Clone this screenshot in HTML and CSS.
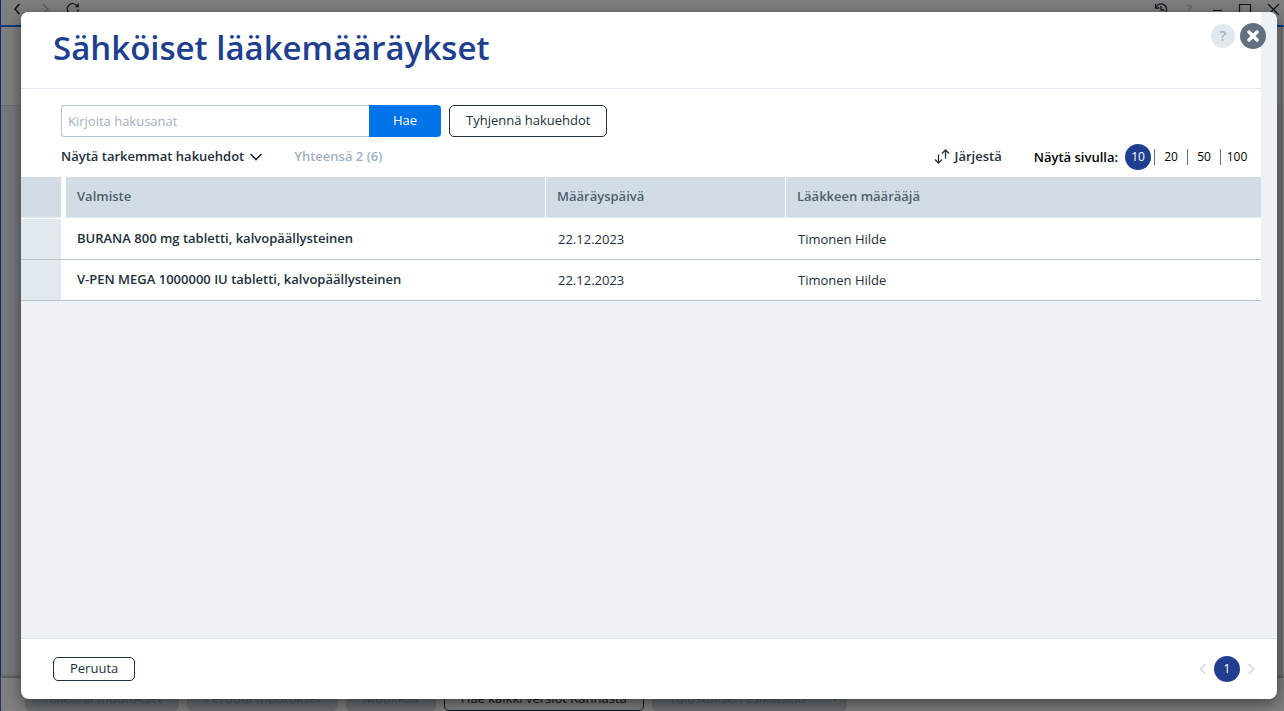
FILE: index.html
```html
<!DOCTYPE html>
<html lang="fi">
<head>
<meta charset="utf-8">
<title>Sähköiset lääkemääräykset</title>
<link rel="stylesheet" href="styles.css">
</head>
<body>
<div class="app" inert>
  <header class="titlebar">
    <button class="tool" aria-label="Takaisin"><svg width="14" height="14" viewBox="0 0 14 14"><path d="M9.500 2 5 7l4.500 5" stroke-width="1.700"/></svg></button>
    <button class="tool faint" aria-label="Eteenpäin"><svg width="14" height="14" viewBox="0 0 14 14"><path d="m5 2 5 5-5 5"/></svg></button>
    <button class="tool" aria-label="Päivitä"><svg width="14" height="14" viewBox="0 0 14 14"><path d="M3.300 11.500A5.500 5.500 0 1 1 11.500 4.500M9.500 11.500A5.500 5.500 0 0 0 12.500 7.500" stroke-width="1.200"/><path d="M12.800 1v4.200H8.600z" fill="currentColor" stroke="none"/></svg></button>
    <span class="grow"></span>
    <button class="tool" aria-label="Historia"><svg width="14" height="14" viewBox="0 0 14 14"><path d="M2 5.500A5.500 5.500 0 1 1 3 11M1.500 2v4h4M7 4v4h3.500" stroke-width="1.300"/></svg></button>
    <button class="tool faint" aria-label="Ohje">?</button>
    <button class="tool" aria-label="Pienennä"><svg width="14" height="14" viewBox="0 0 14 14"><path d="M3 8.500h9" stroke-width="1"/></svg></button>
    <button class="tool" aria-label="Suurenna"><svg width="14" height="14" viewBox="0 0 14 14"><path d="M1.500 2.500h11v11h-11z" stroke-width="1.200"/></svg></button>
    <button class="tool" aria-label="Sulje"><svg width="14" height="14" viewBox="0 0 14 14"><path d="m2 2 11 11M13 2 2 13" stroke-width="1.300"/></svg></button>
  </header>
  <div class="app-head"></div>
  <div class="app-body"></div>
  <footer class="app-foot">
    <button class="btn off">Tallenna muutokset</button>
    <button class="btn off">Peruuta muutokset</button>
    <button class="btn off">Muokkaa</button>
    <button class="btn">Hae kaikki versiot Kannasta</button>
    <button class="btn off split">Tulostuksen esikatselu <svg width="12" height="12" viewBox="0 0 12 12"><path d="m2 4 4 4 4-4"/></svg></button>
  </footer>
</div>

<div class="overlay">
  <section class="dialog" role="dialog" aria-modal="true" aria-labelledby="title">
    <div class="corner">
      <button class="round help" aria-label="Ohje">?</button>
      <button class="round close" aria-label="Sulje"><svg width="12" height="12" viewBox="0 0 12 12"><path d="m2 2 8 8M10 2 2 10" stroke-width="3.500" stroke-linecap="round"/></svg></button>
    </div>
    <div class="scroll">
      <header class="head"><h1 id="title">Sähköiset lääkemääräykset</h1></header>
      <form class="search">
        <input class="field" type="text" aria-label="Hakusanat" placeholder="Kirjoita hakusanat">
        <button class="go" type="button">Hae</button>
        <button class="btn tall" type="button">Tyhjennä hakuehdot</button>
      </form>
      <div class="options">
        <button class="plain">Näytä tarkemmat hakuehdot <svg width="14" height="14" viewBox="0 0 14 14"><path d="m1.500 5 5.500 5.500L12.500 5" stroke-width="1.700"/></svg></button>
        <span class="total">Yhteensä 2 (6)</span>
        <span class="grow"></span>
        <button class="plain sort"><svg width="16" height="16" viewBox="0 0 16 16"><path d="M4.500 6.500v8.500M1 11.500l3.500 3.500L8 11.500M11.500 10.500V2M8 5.500 11.500 2 15 5.500" stroke-width="1.300"/></svg> Järjestä</button>
        <div class="sizes">
          <span class="sizes-label">Näytä sivulla:</span>
          <button class="size current">10</button>
          <button class="size">20</button>
          <button class="size">50</button>
          <button class="size">100</button>
        </div>
      </div>
      <table class="list">
        <colgroup><col class="c-mark"><col class="c-name"><col class="c-date"><col></colgroup>
        <thead>
          <tr><th class="mark"></th><th class="name">Valmiste</th><th>Määräyspäivä</th><th>Lääkkeen määrääjä</th></tr>
        </thead>
        <tbody>
          <tr><td class="mark"></td><td class="name">BURANA 800 mg tabletti, kalvopäällysteinen</td><td>22.12.2023</td><td>Timonen Hilde</td></tr>
          <tr><td class="mark"></td><td class="name">V-PEN MEGA 1000000 IU tabletti, kalvopäällysteinen</td><td>22.12.2023</td><td>Timonen Hilde</td></tr>
        </tbody>
      </table>
    </div>
    <footer class="foot">
      <button class="btn">Peruuta</button>
      <span class="grow"></span>
      <nav class="pager" aria-label="Sivut">
        <button class="arrow" aria-label="Edellinen"><svg width="10" height="12" viewBox="0 0 10 12"><path d="M7.500 1 2.500 6l5 5" stroke-width="1.500"/></svg></button>
        <button class="size current">1</button>
        <button class="arrow" aria-label="Seuraava"><svg width="10" height="12" viewBox="0 0 10 12"><path d="m2.500 1 5 5-5 5" stroke-width="1.500"/></svg></button>
      </nav>
    </footer>
  </section>
</div>
</body>
</html>
```
FILE: styles.css
```css
* { box-sizing: border-box; }

body {
  margin: 0;
  height: 100vh;
  overflow: hidden;
  color: #22303c;
  font: 13px/20px "Segoe UI", "Open Sans", "Noto Sans", sans-serif;
}

button, input { font: inherit; color: inherit; margin: 0; }
button { border: 0; padding: 0; background: none; white-space: nowrap; }
svg { fill: none; stroke: currentColor; stroke-width: 1.5; flex: none; }
.grow { flex: 1; }

/* Application behind the dialog */
.app {
  display: flex;
  flex-direction: column;
  height: 100vh;
  background: #fff;
  border-left: 1px solid #2450e0;
}
.titlebar {
  display: flex;
  gap: 6px;
  height: 27px;
  padding-left: 5px;
  border-bottom: 2px solid #0078f0;
}
.tool {
  display: flex;
  align-items: center;
  justify-content: center;
  width: 22px;
  height: 17px;
}
.faint { color: #b4c0cc; }
.app-head { height: 79px; border-bottom: 1px solid #d4dae0; margin-right: 2px; border-right: 1px solid #b8c4d0; }
.app-body { flex: 1; background: #eef1f6; margin-right: 2px; border-right: 1px solid #b8c4d0; }
.app-foot {
  display: flex;
  gap: 8px;
  height: 33px;
  padding: 9px 24px 0;
  box-shadow: 0 -1px 4px #8090a0;
}
.btn {
  height: 24px;
  padding: 0 16px 2px;
  border: 1px solid #22303c;
  border-radius: 5px;
  line-height: 20px;
}
.off { background: #d2dce5; border-color: #d2dce5; color: #98a6b4; }
.split { display: flex; align-items: center; gap: 23px; padding-right: 5px; }
.tall { height: 32px; }

/* Dialog */
.overlay {
  position: absolute;
  inset: 0;
  display: flex;
  padding: 12px 7px 12px 21px;
  background: rgba(0, 0, 0, 0.5);
}
.dialog {
  position: relative;
  display: flex;
  flex-direction: column;
  flex: 1;
  min-width: 0;
  overflow: hidden;
  border-radius: 8px;
  background: #fff;
  box-shadow: 0 4px 16px rgba(0, 0, 0, 0.5);
}
.corner {
  position: absolute;
  top: 11px;
  right: 11px;
  display: flex;
  align-items: center;
  gap: 5px;
}
.round {
  display: flex;
  align-items: center;
  justify-content: center;
  border-radius: 50%;
}
.help { width: 24px; height: 24px; background: #e1e8ee; color: #9fb0c3; font-size: 14px; font-weight: 600; }
.close { width: 26px; height: 26px; background: #62717f; color: #fff; }

.scroll {
  flex: 1;
  padding-right: 16px;
  background: #eef1f6;
}
.head, .search, .options { background: #fff; }
.head { height: 77px; padding: 11px 32px 0; border-bottom: 1px solid #e1e8ef; }
h1 {
  margin: 0;
  color: #213f8f;
  font-size: 33px;
  line-height: 50px;
  font-weight: 600;
}
.search { display: flex; padding: 16px 40px 0; }
.field {
  width: 308px;
  height: 32px;
  padding: 0 6px;
  border: 1px solid #b9c5d0;
  border-right: 0;
  border-radius: 3px 0 0 3px;
  background: #fff;
}
.field::placeholder { color: #9fb0c0; opacity: 1; }
.go {
  width: 72px;
  height: 32px;
  margin-right: 8px;
  padding-bottom: 2px;
  border-radius: 0 4px 4px 0;
  background: #0074e8;
  color: #fff;
}
.options {
  display: flex;
  align-items: center;
  height: 40px;
  padding: 0 8px 0 40px;
  font-weight: 600;
}
.plain, .total { padding-bottom: 2px; }
.plain { display: flex; align-items: center; gap: 5px; font-weight: 600; }
.total { margin-left: 31px; color: #9fb0c0; }
.sizes { display: flex; align-items: center; margin-left: 32px; color: #000; }
.sizes-label { margin-right: 7px; }
.size { width: 33px; font-size: 12px; font-weight: 500; line-height: 16px; }
.size + .size { border-left: 1px solid #62717f; }
.size.current {
  width: 26px;
  height: 26px;
  margin-right: 3px;
  border-radius: 50%;
  background: #213f8f;
  color: #fff;
}

.list {
  width: 100%;
  table-layout: fixed;
  border-spacing: 0;
  background: #fff;
}
.c-mark { width: 40px; }
.c-name { width: 485px; }
.c-date { width: 240px; }
th {
  height: 41px;
  padding: 0 11px 2px;
  border-right: 1px solid #fff;
  border-bottom: 1px solid #e1e8ef;
  background: #d2dce5;
  color: #4e5f6d;
  text-align: left;
  font-weight: 600;
}
th:last-child, th.mark { border-right: 0; }
th.name { border-left: 5px solid #fff; }
td { height: 41px; padding: 0 12px; border-bottom: 1px solid #b9c5d3; }
td.name { padding: 0 16px 2px; font-weight: 600; }
td.mark { background: #e1e8ee; }
tbody tr:first-child td { height: 42px; border-top: 1px solid #fff; }

.foot {
  display: flex;
  align-items: center;
  height: 61px;
  padding: 0 21px 0 32px;
  border-top: 1px solid #dbe5ef;
}
.pager { display: flex; align-items: center; gap: 6px; }
.pager .current { margin: 0; }
.arrow { display: flex; color: #ccd8e4; }
```
